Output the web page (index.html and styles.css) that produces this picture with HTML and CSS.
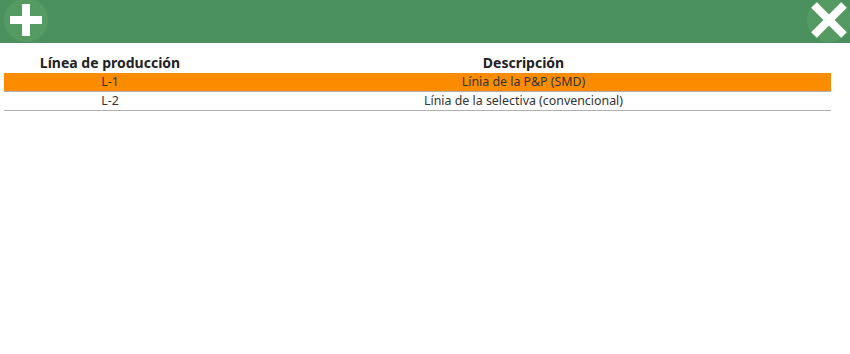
FILE: index.html
```html
<!DOCTYPE html>
<html lang="es">
<head>
    <meta charset="UTF-8">
    <title>Líneas de producción</title>
    <link rel="stylesheet" href="styles.css">
</head>
<body>
    <div class="toolbar">
        <button class="tool-btn add" title="Añadir">
            <svg width="44" height="44" viewBox="0 0 44 44">
                <rect x="6" y="18" width="32" height="8" fill="#fff"/>
                <rect x="18" y="6" width="8" height="32" fill="#fff"/>
            </svg>
        </button>
        <button class="tool-btn close" title="Cerrar">
            <svg width="44" height="44" viewBox="0 0 44 44">
                <path d="M7 7 L37 37 M37 7 L7 37" stroke="#fff" stroke-width="8"/>
            </svg>
        </button>
    </div>

    <table class="lines">
        <thead>
            <tr>
                <th class="col-line">Línea de producción</th>
                <th>Descripción</th>
            </tr>
        </thead>
        <tbody>
            <tr class="selected">
                <td>L-1</td>
                <td>Línia de la P&amp;P (SMD)</td>
            </tr>
            <tr>
                <td>L-2</td>
                <td>Línia de la selectiva (convencional)</td>
            </tr>
        </tbody>
    </table>
</body>
</html>
```

FILE: styles.css
```css
body {
    margin: 0;
    font-family: "Noto Sans", "Open Sans", sans-serif;
    background: #fff;
    color: #333;
}
.toolbar {
    height: 43px;
    background: #4a915e;
    display: flex;
    justify-content: space-between;
    align-items: flex-start;
    overflow: hidden;
}
.tool-btn {
    width: 44px;
    height: 44px;
    margin-top: -2px;
    padding: 0;
    border: none;
    border-radius: 50%;
    background: #559a63;
}
.tool-btn svg {
    display: block;
}
.add {
    margin-left: 4px;
}
.close {
    margin-right: -1px;
}
.lines {
    width: 827px;
    margin: 8px 0 0 4px;
    border-collapse: collapse;
    font-size: 12.4px;
}
.lines th {
    height: 22px;
    padding: 0;
    font-size: 14px;
    font-weight: bold;
    color: #222;
    text-align: center;
}
.lines .col-line {
    width: 212px;
}
.lines td {
    height: 18px;
    padding: 0;
    text-align: center;
    border-bottom: 1px solid #b0b0b0;
    line-height: 18px;
}
.lines tr.selected td {
    background: #fb8c00;
}
```
